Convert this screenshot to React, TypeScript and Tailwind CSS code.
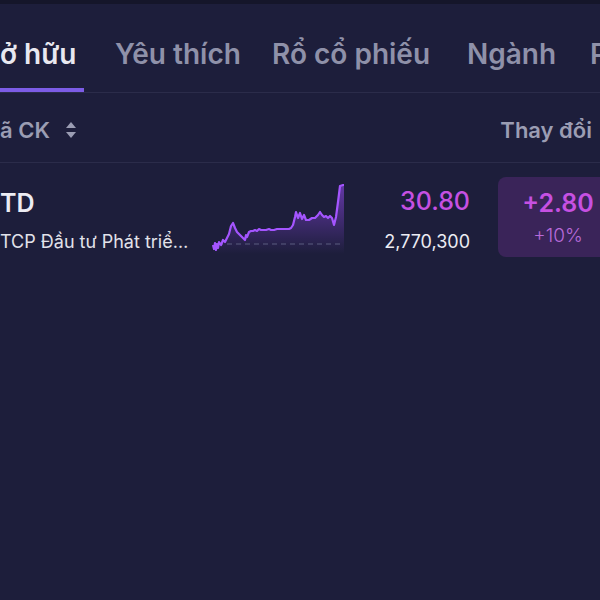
import React from "react";

const linePts: [number, number][] = [
  [2, 63], [3, 67], [4, 61], [5, 68], [6, 62], [7, 66], [8, 60], [10, 63], [12, 58], [14, 60], [16, 56], [18, 52],
  [20, 44], [22, 41], [24, 46], [26, 50], [28, 52], [30, 54], [32, 56], [34, 58], [35, 53], [36, 55], [38, 50],
  [40, 49], [42, 49], [44, 48], [46, 49], [48, 47], [50, 48], [52, 48], [55, 48], [58, 47], [60, 48], [63, 48],
  [66, 47], [70, 47], [74, 47], [78, 47], [80, 46], [82, 43], [84, 35], [85, 30], [87, 36], [89, 31], [91, 37],
  [93, 33], [95, 38], [98, 38], [101, 36], [104, 36], [107, 33], [109, 30], [111, 33], [113, 35], [115, 34],
  [117, 36], [119, 34], [121, 36], [123, 43], [125, 35], [127, 20], [129, 4], [132, 3], [133, 3],
];

function Sparkline() {
  const d = linePts.map((p, i) => `${i === 0 ? "M" : "L"}${p[0]} ${p[1]}`).join(" ");
  const fill = `${d} L133 72 L2 72 Z`;
  return (
    <svg width="136" height="74" viewBox="0 0 136 74" className="block">
      <defs>
        <linearGradient id="g" x1="0" y1="0" x2="0" y2="1">
          <stop offset="0%" stopColor="#9d4dff" stopOpacity="0.55" />
          <stop offset="100%" stopColor="#9d4dff" stopOpacity="0" />
        </linearGradient>
      </defs>
      <path d={fill} fill="url(#g)" />
      <line x1="7" y1="62" x2="131" y2="62" stroke="#5a5c80" strokeWidth="1.2" strokeDasharray="5 4" />
      <path d={d} fill="none" stroke="#a455ff" strokeWidth="2.2" strokeLinejoin="round" />
    </svg>
  );
}

function SortIcon() {
  return (
    <svg width="12" height="20" viewBox="0 0 12 20" className="block">
      <path d="M6 2 L11 8 L1 8 Z" fill="#9b9db3" />
      <path d="M6 18 L11 12 L1 12 Z" fill="#9b9db3" />
    </svg>
  );
}

export default function App() {
  return (
    <div className="w-[600px] h-[600px] overflow-hidden bg-[#1d1e3b] font-['Inter',sans-serif]">
      <div className="h-[4px] bg-[#15162a]" />
      <div className="flex h-[89px] items-start border-b border-[#2b2c4a] whitespace-nowrap overflow-hidden">
        <div className="flex pt-[33px] shrink-0">
          <div className="relative h-[55px] w-[84px] shrink-0">
            <span className="block text-[28px] leading-[34px] font-semibold text-[#e8e8f0]">ở hữu</span>
            <div className="absolute left-0 right-0 bottom-0 h-[4px] bg-[#7c5ce6]" />
          </div>
          <span className="ml-[31px] w-[125px] shrink-0 block text-[28px] leading-[34px] font-semibold text-[#8f91a9]">Yêu thích</span>
          <span className="ml-[32px] w-[163px] shrink-0 block text-[28px] leading-[34px] font-semibold text-[#8f91a9]">Rổ cổ phiếu</span>
          <span className="ml-[32px] w-[92px] shrink-0 block text-[28px] leading-[34px] font-semibold text-[#8f91a9]">Ngành</span>
          <span className="ml-[31px] shrink-0 block text-[28px] leading-[34px] font-semibold text-[#8f91a9]">P</span>
        </div>
      </div>
      <div className="flex h-[70px] items-center justify-between border-b border-[#2b2c4a] pr-[8px] pt-[5px]">
        <div className="flex items-center gap-[15px]">
          <span className="text-[22px] font-semibold text-[#9b9db3]">ã CK</span>
          <SortIcon />
        </div>
        <span className="text-[22px] font-semibold text-[#9b9db3]">Thay đổi</span>
      </div>
      <div className="flex items-start pt-[14px]">
        <div className="w-[211px] shrink-0 pt-[11px]">
          <div className="text-[25px] leading-[30px] font-semibold text-[#ececf3]">TD</div>
          <div className="mt-[13px] text-[18px] leading-[22px] text-[#e2e2ea] whitespace-nowrap">TCP Đầu tư Phát triể…</div>
        </div>
        <div className="w-[136px] shrink-0 pt-[5px]">
          <Sparkline />
        </div>
        <div className="w-[123px] shrink-0 flex flex-col items-end pt-[9px]">
          <div className="text-[25px] leading-[30px] font-medium text-[#c650e2]">30.80</div>
          <div className="mt-[15px] text-[18px] leading-[22px] text-[#ececf3]">2,770,300</div>
        </div>
        <div className="ml-[28px] shrink-0 w-[120px] h-[80px] rounded-[8px] bg-[#3a2459] flex flex-col items-center pt-[11px]">
          <div className="text-[25px] leading-[30px] font-semibold text-[#c650e2]">+2.80</div>
          <div className="mt-[7px] text-[19px] leading-[22px] font-light text-[#b86ada]">+10%</div>
        </div>
      </div>
    </div>
  );
}
